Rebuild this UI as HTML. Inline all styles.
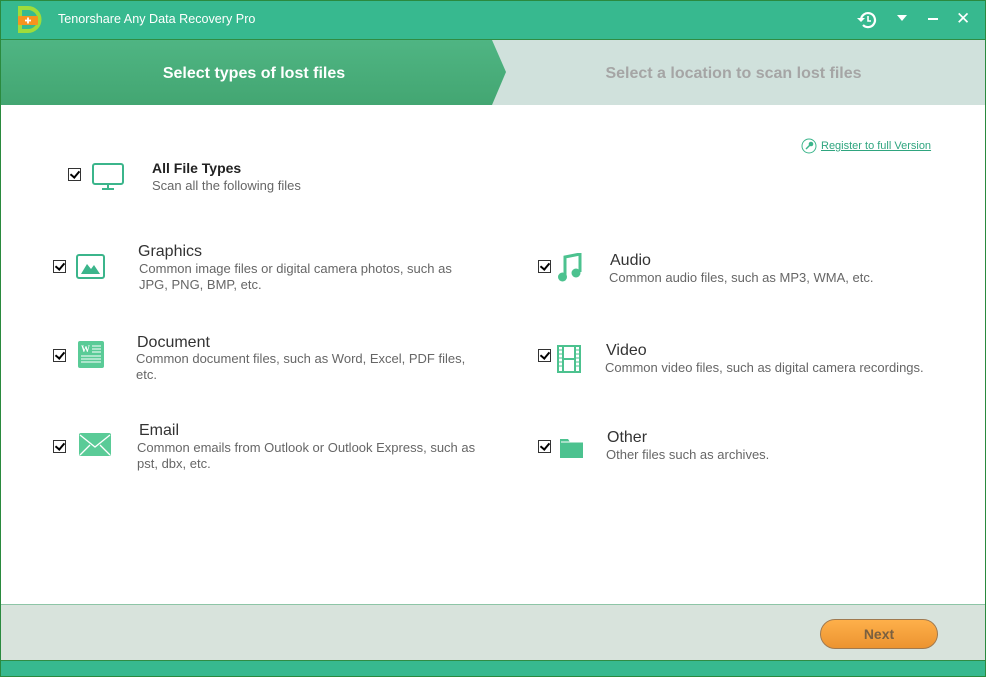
<!DOCTYPE html>
<html><head><meta charset="utf-8"><style>
*{margin:0;padding:0;box-sizing:border-box}
body{width:986px;height:677px;position:relative;overflow:hidden;font-family:"Liberation Sans",Arial,sans-serif;background:#fff}
.a{position:absolute}
.cb{position:absolute;width:13px;height:13px;border:1px solid #333;background:#fff}
.cb:after{content:"";position:absolute;left:3px;top:0px;width:4px;height:7px;border:solid #000;border-width:0 2px 2px 0;transform:rotate(40deg)}
.t{position:absolute;font-size:16px;color:#333}
.d{position:absolute;font-size:13px;color:#666;line-height:16px;white-space:nowrap}
</style></head><body>
<div class="a" style="left:0;top:0;width:986px;height:677px;border:1px solid #2a8a3e;z-index:5;pointer-events:none"></div>
<div class="a" style="left:0;top:0;width:986px;height:40px;background:#37b98f;border-bottom:1px solid #2f8c43"></div>
<svg class="a" style="left:16px;top:6px" width="28" height="28" viewBox="0 0 28 28"><path d="M4 2h8a11 11 0 0 1 0 23H4z" fill="none" stroke="#9fdc3a" stroke-width="4"/><rect x="2" y="10" width="20" height="9" rx="1" fill="#f7931e"/><path d="M12 11.5v6M9 14.5h6" stroke="#fff" stroke-width="1.8"/></svg>
<div class="a" style="left:58px;top:12px;color:#fff;font-size:12.6px">Tenorshare Any Data Recovery Pro</div>
<svg class="a" style="left:856px;top:9px" width="24" height="22" viewBox="0 0 24 22"><path d="M5 11a7 7 0 1 1 2 5" fill="none" stroke="#fff" stroke-width="2.2"/><path d="M1 9l4 4 4-4z" fill="#fff"/><path d="M12 7v5h3" fill="none" stroke="#fff" stroke-width="1.6"/></svg>
<svg class="a" style="left:897px;top:15px" width="10" height="6"><path d="M0 0h10L5 6z" fill="#fff"/></svg>
<div class="a" style="left:928px;top:18px;width:10px;height:2px;background:#fff"></div>
<div class="a" style="left:956px;top:9px;color:#fff;font-size:17px">✕</div>
<div class="a" style="left:0;top:40px;width:986px;height:65px;background:#d0e1dc"></div>
<svg class="a" style="left:0;top:40px" width="510" height="65"><defs><linearGradient id="g" x1="0" y1="0" x2="0" y2="1"><stop offset="0" stop-color="#4fb583"/><stop offset="1" stop-color="#43a672"/></linearGradient></defs><path d="M0 0H492L506 32 492 65H0z" fill="url(#g)"/></svg>
<div class="a" style="left:0;top:65px;width:508px;text-align:center;color:#fff;font-size:16px;font-weight:bold">Select types of lost files</div>
<div class="a" style="left:506px;top:65px;width:455px;text-align:center;color:#a5a5a5;font-size:16px;font-weight:bold">Select a location to scan lost files</div>
<svg class="a" style="left:801px;top:138px" width="16" height="16"><circle cx="8" cy="8" r="7" fill="none" stroke="#3bb58b"/><path d="M5 11l4-4" stroke="#3bb58b" stroke-width="1.5"/><circle cx="10" cy="6" r="2.3" fill="#3bb58b"/></svg>
<div class="a" style="left:821px;top:140px;font-size:11px;color:#2fa57f;text-decoration:underline">Register to full Version</div>
<div class="cb" style="left:68px;top:168px"></div>
<svg class="a" style="left:92px;top:163px" width="33" height="28"><rect x="1" y="1" width="30" height="20" rx="2" fill="none" stroke="#3bb58b" stroke-width="2"/><path d="M16 21v4M10 26h12" stroke="#3bb58b" stroke-width="2"/></svg>
<div class="a" style="left:152px;top:160px;font-size:14px;font-weight:bold;color:#222">All File Types</div>
<div class="d" style="left:152px;top:178px">Scan all the following files</div>

<div class="cb" style="left:53px;top:260px"></div>
<svg class="a" style="left:76px;top:254px" width="30" height="26"><rect x="1" y="1" width="27" height="23" rx="2" fill="none" stroke="#3bb58b" stroke-width="2"/><path d="M5 20l6-10 4 5 3-4 6 9z" fill="#3bb58b"/></svg>
<div class="t" style="left:138px;top:243px">Graphics</div>
<div class="d" style="left:139px;top:261px">Common image files or digital camera photos, such as<br>JPG, PNG, BMP, etc.</div>

<div class="cb" style="left:53px;top:349px"></div>
<svg class="a" style="left:78px;top:341px" width="26" height="27"><rect width="26" height="27" rx="2" fill="#5acb97"/><text x="3" y="11" font-size="9" font-weight="bold" fill="#fff" font-family="Liberation Serif">W</text><path d="M14 5h9M14 8h9M14 11h9M3 15h20M3 18h20M3 21h20" stroke="#fff" stroke-width="1"/></svg>
<div class="t" style="left:137px;top:334px">Document</div>
<div class="d" style="left:136px;top:351px">Common document files, such as Word, Excel, PDF files,<br>etc.</div>

<div class="cb" style="left:53px;top:440px"></div>
<svg class="a" style="left:79px;top:433px" width="32" height="23"><rect width="32" height="23" rx="2" fill="#5acb97"/><path d="M1 2l15 12L31 2M1 22l10-10M31 22L21 12" stroke="#fff" stroke-width="1.3" fill="none"/></svg>
<div class="t" style="left:139px;top:422px">Email</div>
<div class="d" style="left:137px;top:440px">Common emails from Outlook or Outlook Express, such as<br>pst, dbx, etc.</div>

<div class="cb" style="left:538px;top:260px"></div>
<svg class="a" style="left:557px;top:253px" width="26" height="30"><path d="M8 22V4l15-3v18" stroke="#4cc28f" stroke-width="3" fill="none"/><circle cx="5.5" cy="24" r="4.5" fill="#4cc28f"/><circle cx="19" cy="20" r="4.5" fill="#4cc28f"/></svg>
<div class="t" style="left:610px;top:252px">Audio</div>
<div class="d" style="left:609px;top:270px">Common audio files, such as MP3, WMA, etc.</div>

<div class="cb" style="left:538px;top:349px"></div>
<svg class="a" style="left:557px;top:345px" width="24" height="28"><rect x="1" y="1" width="22" height="26" fill="none" stroke="#4cc28f" stroke-width="2"/><path d="M6 1v26M18 1v26M6 14h12" stroke="#4cc28f" stroke-width="2"/><path d="M2 5h3M2 9h3M2 13h3M2 17h3M2 21h3M19 5h3M19 9h3M19 13h3M19 17h3M19 21h3" stroke="#4cc28f" stroke-width="1"/></svg>
<div class="t" style="left:606px;top:342px">Video</div>
<div class="d" style="left:605px;top:360px">Common video files, such as digital camera recordings.</div>

<div class="cb" style="left:538px;top:440px"></div>
<svg class="a" style="left:559px;top:437px" width="26" height="22"><path d="M1 21V2h8l2 3h13v16z" fill="#4cc28f"/><path d="M2 5h22" stroke="#fff" stroke-width="1"/></svg>
<div class="t" style="left:607px;top:429px">Other</div>
<div class="d" style="left:606px;top:447px">Other files such as archives.</div>

<div class="a" style="left:0;top:604px;width:986px;height:56px;background:#d8e3dc;border-top:1px solid #8dc5a6"></div>
<div class="a" style="left:820px;top:619px;width:118px;height:30px;border-radius:15px;background:linear-gradient(#feb04a,#ec9430);border:1px solid #a07a50;text-align:center;line-height:28px;font-size:14px;font-weight:bold;color:#7a6040">Next</div>
<div class="a" style="left:0;top:660px;width:986px;height:17px;background:#37b98f;border-top:1px solid #2f8c43"></div>
</body></html>
